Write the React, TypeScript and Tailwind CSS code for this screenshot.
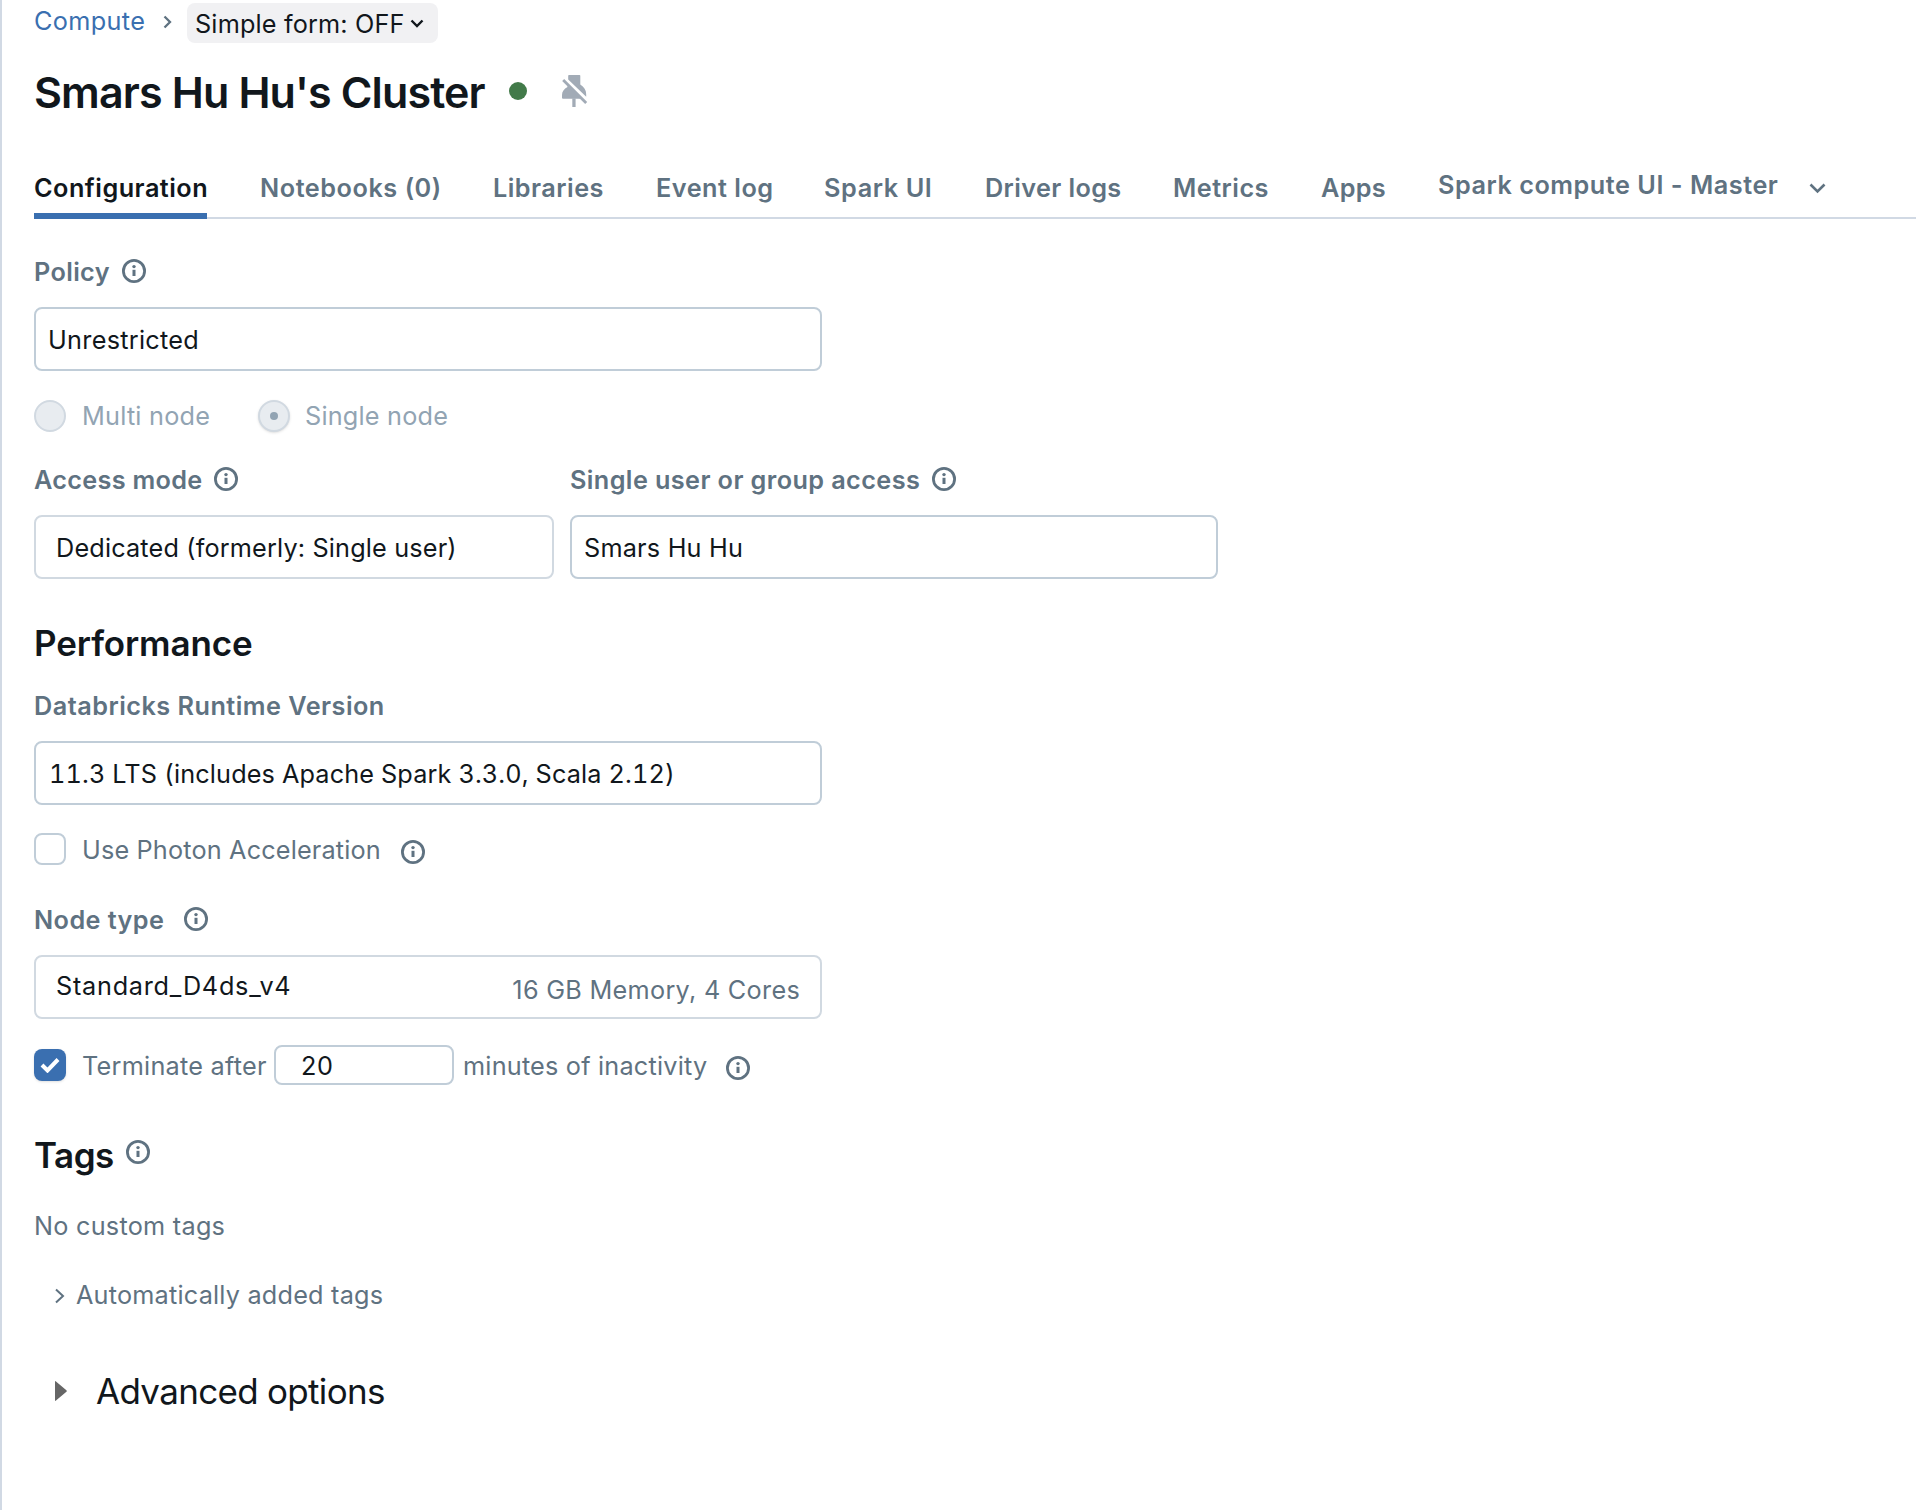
import type { ReactNode } from "react";

function InfoIcon({ className = "" }: { className?: string }) {
  return (
    <svg viewBox="0 0 24 24" className={`size-6 shrink-0 text-[#5f7281] ${className}`} fill="none">
      <circle cx="12" cy="12" r="10.6" stroke="currentColor" strokeWidth="2.8" />
      <rect x="10.5" y="10.8" width="3" height="6.2" fill="currentColor" />
      <circle cx="12" cy="7.6" r="1.7" fill="currentColor" />
    </svg>
  );
}

function PinOffIcon({ className = "" }: { className?: string }) {
  return (
    <svg viewBox="0 0 26 32" className={`h-8 w-[26px] shrink-0 text-[#a2abb6] ${className}`} fill="currentColor">
      <path d="M7 0H17.5Q18.3 0 18.3 .8V9.6C22 12 24.2 15 24.2 19.2V21.8L6.2 4.4V.8Q6.2 0 7 0Z" />
      <path d="M5.5 9V12C2 14 0 16.5 0 20V22.8Q0 23.8 1 23.8H20Z" />
      <path d="M10.3 23.4H13.6V32H10.3Z" />
      <path d="M1.2 5L24.2 28" stroke="currentColor" strokeWidth="2.8" />
    </svg>
  );
}

function Chevron({ d, box, className }: { d: string; box: string; className: string }) {
  return (
    <svg viewBox={box} className={`shrink-0 ${className}`} fill="none" stroke="currentColor">
      <path d={d} />
    </svg>
  );
}

const tabs = [
  { label: "Notebooks (0)", style: "w-[181px] tracking-[0.54px]" },
  { label: "Libraries", style: "w-[111px] tracking-[0.48px]" },
  { label: "Event log", style: "w-[116px] tracking-[0.5px]" },
  { label: "Spark UI", style: "w-[109px] tracking-[0.6px]" },
  { label: "Driver logs", style: "w-[136px] tracking-[0.38px]" },
  { label: "Metrics", style: "w-[96px] tracking-[0.48px]" },
  { label: "Apps", style: "w-[65px] tracking-[0.3px]" },
];

function Label({ children, className = "" }: { children: ReactNode; className?: string }) {
  return <div className={`flex h-8 font-semibold text-[#5f7281] ${className}`}>{children}</div>;
}

function Field({ children, className = "" }: { children: ReactNode; className?: string }) {
  return (
    <div className={`mt-[19px] flex h-16 items-center rounded-lg border-2 pt-[2px] ${className}`}>{children}</div>
  );
}

export default function App() {
  return (
    <div className="h-[1510px] w-[1916px] overflow-hidden border-l-2 border-[#d1d9e4] bg-white pl-8 font-['Inter',sans-serif] text-[25.25px] leading-8 whitespace-nowrap text-[#11171c]">
      <div className="flex h-[43px] items-start pt-[3px]">
        <a className="mt-[2px] w-[129px] tracking-[0.35px] text-[#3a6fb0]">Compute</a>
        <Chevron box="0 0 9 14" d="M1.5 1.5L7 7L1.5 12.5" className="mt-3 h-[14px] w-[9px] stroke-[2.3] text-[#5f7281]" />
        <button className="ml-[15px] flex h-10 w-[251px] rounded-lg bg-[#f1f1f3] pt-[5px] pl-2">
          <span className="w-[215px] text-left tracking-[0.16px]">Simple form: OFF</span>
          <Chevron box="0 0 14 9" d="M1.5 1.5L7 7L12.5 1.5" className="mt-[11px] h-[9px] w-[14px] stroke-[2.4]" />
        </button>
      </div>

      <div className="mt-[23px] flex h-[52px]">
        <h1 className="w-[475px] text-[43px] leading-[52px] font-semibold tracking-[-0.86px]">Smars Hu Hu's Cluster</h1>
        <span className="mt-4 size-[18px] rounded-full bg-[#427a49]" />
        <PinOffIcon className="mt-[9px] ml-[35px]" />
      </div>

      <nav className="mt-[54px] flex h-[47px] gap-[52px] border-b-2 border-[#d1d9e4] font-semibold text-[#5f7281]">
        <a className="h-[47px] w-[173px] border-b-6 border-[#3a6fb0] tracking-[0.48px] text-[#11171c]">Configuration</a>
        <div className="flex gap-[52px] pl-px">
          {tabs.map((t) => (
            <a key={t.label} className={t.style}>
              {t.label}
            </a>
          ))}
        </div>
        <a className="-mt-[3px] flex">
          <span className="w-[371px] tracking-[0.52px]">Spark compute UI - Master</span>
          <Chevron box="0 0 17 11" d="M1.5 1.5L8.5 8.5L15.5 1.5" className="mt-[14px] h-[11px] w-[17px] stroke-[2.6]" />
        </a>
      </nav>

      <Label className="mt-[37px]">
        <span className="w-[88px] tracking-[0.35px]">Policy</span>
        <InfoIcon className="mt-[3px]" />
      </Label>
      <Field className="w-[788px] border-[#c0cdd8] pl-[12px]">
        <span className="tracking-[0.28px]">Unrestricted</span>
      </Field>

      <div className="mt-[29px] flex h-8 text-[#92a4b3]">
        <span className="size-8 rounded-full border-2 border-[#d1d9e1] bg-[#e8ecf0]" />
        <span className="ml-4 w-44 tracking-[0.22px]">Multi node</span>
        <span className="flex size-8 items-center justify-center rounded-full border-2 border-[#d1d9e1] bg-[#e8ecf0] shadow-sm">
          <span className="size-2 rounded-full bg-[#92a4b3]" />
        </span>
        <span className="ml-[15px] tracking-[0.2px]">Single node</span>
      </div>

      <div className="mt-8 flex gap-4">
        <div className="w-[520px]">
          <Label>
            <span className="w-[180px] tracking-[0.3px]">Access mode</span>
            <InfoIcon className="mt-[3px]" />
          </Label>
          <Field className="border-[#d1d9e1] pl-5">
            <span className="tracking-[0.16px]">Dedicated (formerly: Single user)</span>
          </Field>
        </div>
        <div className="w-[648px]">
          <Label>
            <span className="w-[362px] tracking-[0.4px]">Single user or group access</span>
            <InfoIcon className="mt-[3px]" />
          </Label>
          <Field className="border-[#c0cdd8] pl-[12px]">
            <span className="tracking-[0.2px]">Smars Hu Hu</span>
          </Field>
        </div>
      </div>

      <h2 className="mt-[43px] text-[35px] leading-[42px] font-semibold tracking-[-0.13px]">Performance</h2>
      <Label className="mt-[26px]">
        <span className="tracking-[0.48px]">Databricks Runtime Version</span>
      </Label>
      <Field className="w-[788px] border-[#c0cdd8] pl-[13px]">
        <span className="tracking-[0.13px] tabular-nums">11.3 LTS (includes Apache Spark 3.3.0, Scala 2.12)</span>
      </Field>

      <div className="mt-7 flex h-8 text-[#5f7281]">
        <span className="size-8 rounded-lg border-2 border-[#c0cdd8]" />
        <span className="mt-px ml-4 w-[319px] tracking-[0.16px]">Use Photon Acceleration</span>
        <InfoIcon className="mt-[7px]" />
      </div>

      <Label className="mt-[39px]">
        <span className="w-[150px] tracking-[0.42px]">Node type</span>
        <InfoIcon className="mt-[3px]" />
      </Label>
      <Field className="w-[788px] justify-between border-[#d1d9e1] pr-5 pl-5">
        <span className="-mt-1 tracking-[0.74px]">Standard_D4ds_v4</span>
        <span className="mt-1 tracking-[0.28px] text-[#5f7281]">16 GB Memory, 4 Cores</span>
      </Field>

      <div className="mt-[26px] flex h-10 text-[#5f7281]">
        <span className="mt-1 flex size-8 items-center justify-center rounded-lg bg-[#3a6fb0] text-white shadow-sm">
          <Chevron box="0 0 20 16" d="M2 8L7.5 13.5L18 2.5" className="h-4 w-5 stroke-4" />
        </span>
        <span className="mt-[5px] ml-4 w-[192px] tracking-[0.25px]">Terminate after</span>
        <span className="h-10 w-[180px] rounded-lg border-2 border-[#c0cdd8] pt-[3px] pl-[25px] tracking-[0.6px] text-[#11171c]">20</span>
        <span className="mt-[5px] ml-[9px] w-[263px] tracking-[0.2px]">minutes of inactivity</span>
        <InfoIcon className="mt-[11px]" />
      </div>

      <div className="mt-[49px] flex h-[42px]">
        <h2 className="w-[92px] text-[35px] leading-[42px] font-semibold tracking-[-0.5px]">Tags</h2>
        <InfoIcon className="mt-[6px]" />
      </div>
      <p className="mt-[34px] tracking-[0.25px] text-[#5f7281]">No custom tags</p>
      <div className="mt-[37px] flex h-8 pl-[21px] text-[#5f7281]">
        <Chevron box="0 0 10 16" d="M1 1.5L8 8L1 14.5" className="mt-[9px] h-4 w-[10px] stroke-2" />
        <span className="ml-[11px] tracking-[0.2px]">Automatically added tags</span>
      </div>
      <div className="mt-[59px] flex h-[42px] pl-[21px]">
        <svg viewBox="0 0 12 20" className="mt-[11px] h-5 w-3 text-[#666666]" fill="currentColor">
          <path d="M0 .8Q0-.4 1 .5L11.4 9.2Q12.2 10 11.4 10.8L1 19.5Q0 20.4 0 19.2Z" />
        </svg>
        <span className="ml-[29px] text-[35px] leading-[42px] tracking-[-0.69px]">Advanced options</span>
      </div>
    </div>
  );
}
